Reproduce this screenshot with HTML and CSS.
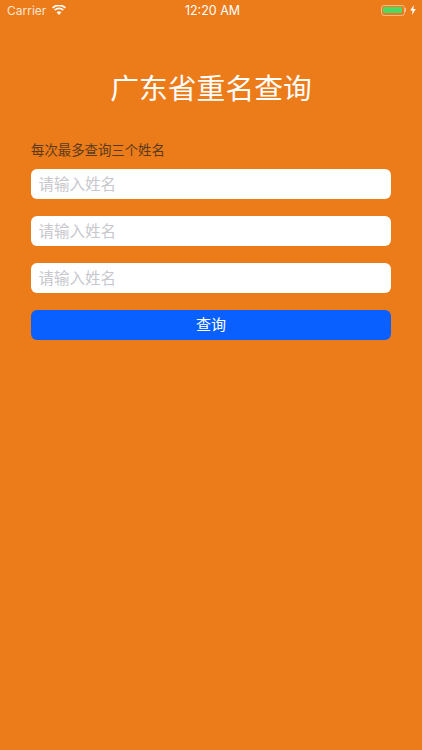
FILE: index.html
```html
<!DOCTYPE html>
<html lang="zh">
<head>
    <meta charset="UTF-8">
    <meta name="viewport" content="width=device-width, initial-scale=1.0">
    <title>广东省重名查询</title>
    <link rel="stylesheet" href="styles.css">
</head>
<body>
    <div class="status-bar">
        <div class="status-left">
            <span>Carrier</span>
            <svg class="wifi" width="14" height="10" viewBox="0 0 14 10">
                <path d="M7 10 L4.6 7.2 A3.6 3.6 0 0 1 9.4 7.2 Z" fill="#fff"/>
                <path d="M2.7 5.1 A6.2 6.2 0 0 1 11.3 5.1" fill="none" stroke="#fff" stroke-width="1.7"/>
                <path d="M0.6 2.9 A9.2 9.2 0 0 1 13.4 2.9" fill="none" stroke="#fff" stroke-width="1.7"/>
            </svg>
        </div>
        <div class="status-time">12:20 AM</div>
        <div class="status-right">
            <div class="battery"><div class="battery-level"></div></div>
            <div class="battery-cap"></div>
            <svg class="bolt" width="6" height="10" viewBox="0 0 5 9">
                <path d="M3.2 0 L0 5 L2.1 5 L1.6 9 L5 3.6 L2.8 3.6 Z" fill="#fff"/>
            </svg>
        </div>
    </div>

    <div class="content">
        <h1 class="title">广东省重名查询</h1>
        <p class="hint">每次最多查询三个姓名</p>
        <div class="form">
            <input class="name-input" type="text" placeholder="请输入姓名">
            <input class="name-input" type="text" placeholder="请输入姓名">
            <input class="name-input" type="text" placeholder="请输入姓名">
            <button class="search-button">查询</button>
        </div>
    </div>
</body>
</html>
```

FILE: styles.css
```css
* {
    box-sizing: border-box;
}

html, body {
    height: 100%;
}

body {
    margin: 0;
    background-color: #EC7B1A;
    font-family: "Liberation Sans", "Noto Sans CJK SC", sans-serif;
    overflow: hidden;
}

.status-bar {
    display: grid;
    grid-template-columns: 1fr auto 1fr;
    align-items: center;
    height: 20px;
    padding: 0 6px 0 7px;
    color: #fff;
    font-family: "Inter", "Liberation Sans", sans-serif;
    font-size: 12px;
}

.status-left {
    display: flex;
    align-items: center;
    gap: 6px;
    color: #FBE6D2;
}

.status-time {
    font-size: 12.5px;
    font-weight: 400;
    padding-left: 2px;
}

.status-right {
    display: flex;
    align-items: center;
    justify-content: flex-end;
}

.battery {
    width: 24px;
    height: 11px;
    padding: 1.5px;
    border: 1px solid #F5B98A;
    border-radius: 3px;
}

.battery-level {
    height: 100%;
    background-color: #4CD964;
    border-radius: 1px;
}

.battery-cap {
    width: 1.5px;
    height: 4px;
    margin-right: 4px;
    background-color: #F5B98A;
}

.content {
    padding: 0 31px;
}

.title {
    margin: 48px 0 0;
    color: #fff;
    font-size: 28.8px;
    font-weight: 400;
    line-height: 42px;
    text-align: center;
}

.hint {
    margin: 31px 0 0;
    color: #5B3A1C;
    font-size: 13.4px;
    line-height: 20px;
}

.form {
    display: flex;
    flex-direction: column;
    gap: 17px;
    margin-top: 8px;
}

.name-input {
    width: 100%;
    height: 30px;
    padding: 1px 8px 0 7.5px;
    background-color: #fff;
    border: none;
    border-radius: 6px;
    font-family: inherit;
    font-size: 15.5px;
}

.name-input::placeholder {
    color: #C7C7CD;
    opacity: 1;
}

.search-button {
    height: 30.5px;
    margin-top: -0.5px;
    padding: 0 0 2px;
    background-color: #0A60FF;
    color: #fff;
    border: none;
    border-radius: 6px;
    font-family: inherit;
    font-size: 15px;
}
```
